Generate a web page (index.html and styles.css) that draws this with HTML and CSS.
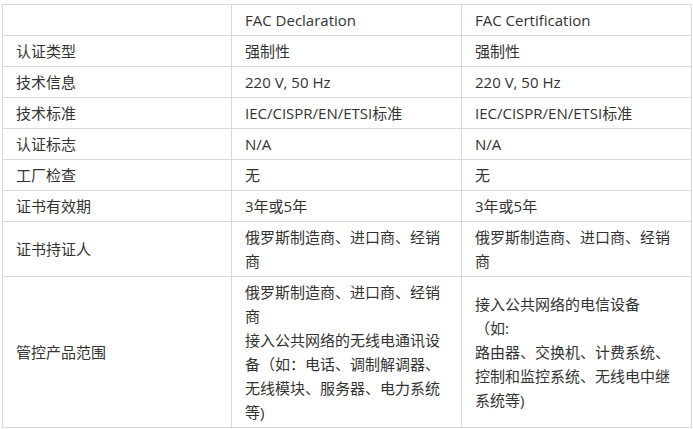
FILE: index.html
```html
<!DOCTYPE html>
<html lang="zh-CN">
<head>
    <meta charset="UTF-8">
    <meta name="viewport" content="width=device-width, initial-scale=1.0">
    <title>FAC认证对比</title>
    <link rel="stylesheet" href="styles.css">
</head>
<body>

    <!-- FAC comparison table -->
    <table class="compare-table">
        <colgroup>
            <col class="col-label">
            <col class="col-value">
            <col class="col-value">
        </colgroup>
        <tr>
            <td></td>
            <td>FAC Declaration</td>
            <td>FAC Certification</td>
        </tr>
        <tr>
            <td>认证类型</td>
            <td>强制性</td>
            <td>强制性</td>
        </tr>
        <tr>
            <td>技术信息</td>
            <td>220 V, 50 Hz</td>
            <td>220 V, 50 Hz</td>
        </tr>
        <tr>
            <td>技术标准</td>
            <td>IEC/CISPR/EN/ETSI标准</td>
            <td>IEC/CISPR/EN/ETSI标准</td>
        </tr>
        <tr>
            <td>认证标志</td>
            <td>N/A</td>
            <td>N/A</td>
        </tr>
        <tr>
            <td>工厂检查</td>
            <td>无</td>
            <td>无</td>
        </tr>
        <tr>
            <td>证书有效期</td>
            <td>3年或5年</td>
            <td>3年或5年</td>
        </tr>
        <tr>
            <td>证书持证人</td>
            <td>俄罗斯制造商、进口商、经销商</td>
            <td>俄罗斯制造商、进口商、经销商</td>
        </tr>
        <tr>
            <td>管控产品范围</td>
            <td>俄罗斯制造商、进口商、经销商<br>接入公共网络的无线电通讯设备（如：电话、调制解调器、无线模块、服务器、电力系统等)</td>
            <td>接入公共网络的电信设备<br>（如:<br>路由器、交换机、计费系统、控制和监控系统、无线电中继系统等)</td>
        </tr>
    </table>

</body>
</html>
```

FILE: styles.css
```css
/* Reset default margin */
body {
    margin: 0;
    background-color: #fff;
    font-family: "Open Sans", "Noto Sans CJK SC", sans-serif;
    font-size: 15px;
    color: #333;
}

/* Comparison table */
.compare-table {
    margin: 4px 0 0 2px;
    width: 689px;
    table-layout: fixed;
    border-collapse: collapse;
}

.col-label {
    width: 229px;
}

.col-value {
    width: 230px;
}

.compare-table td {
    border: 1px solid #d9d9d9;
    padding: 3px 13px;
    line-height: 24px;
    vertical-align: middle;
    text-spacing-trim: space-all;
}
```
